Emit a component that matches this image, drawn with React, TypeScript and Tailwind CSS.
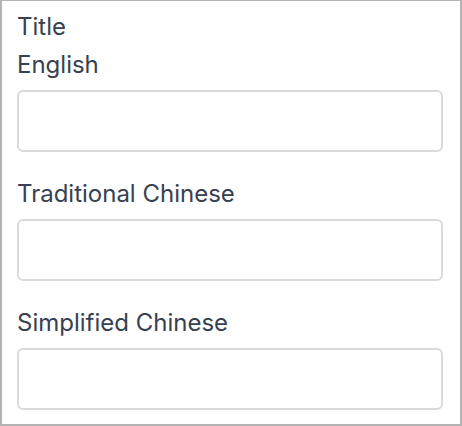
export default function App() {
  const inputCls =
    "block w-[426px] h-[62px] mt-[7px] border-2 border-[#dadada] rounded-[6px] bg-white outline-none";
  return (
    <div
      className="w-[462px] h-[426px] bg-white border-2 border-t border-[#b3b3b3] pl-[15px] pt-[8px] text-[24px] leading-[36px] text-[#374151]"
      style={{ fontFamily: "Inter, 'Noto Sans', sans-serif" }}
    >
      <div>Title</div>
      <div className="mt-[2px]">English</div>
      <input type="text" className={inputCls} />
      <div className="mt-[24px]">Traditional Chinese</div>
      <input type="text" className={inputCls} />
      <div className="mt-[24px]">Simplified Chinese</div>
      <input type="text" className={inputCls} />
    </div>
  );
}
